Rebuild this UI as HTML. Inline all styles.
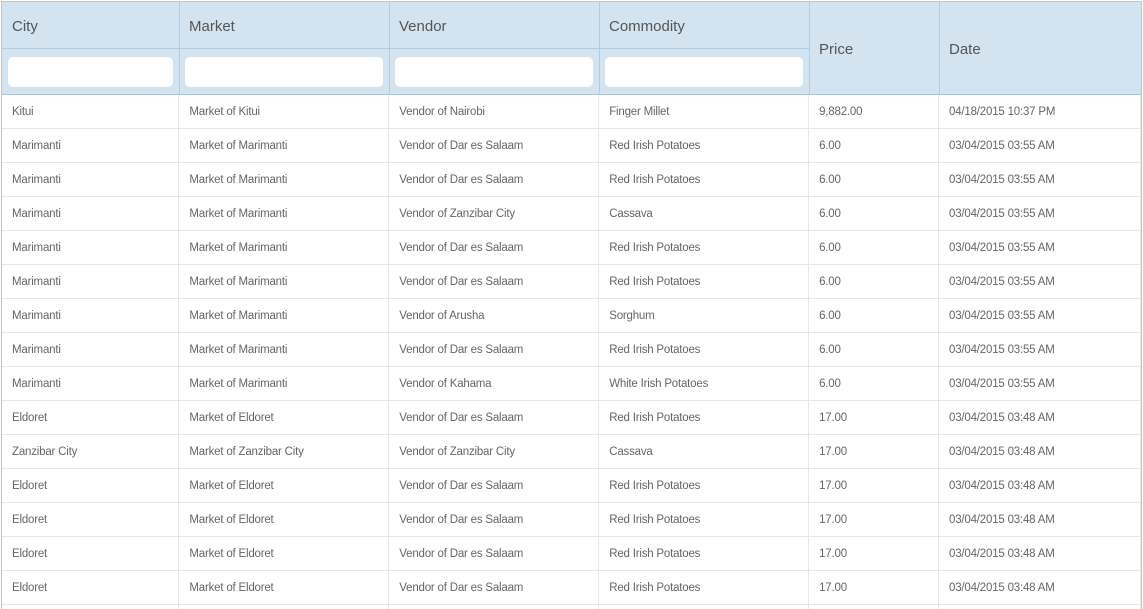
<!DOCTYPE html>
<html><head><style>
html,body{margin:0;width:1143px;height:608px;overflow:hidden;background:#fff;font-family:"Liberation Sans",sans-serif;}
.wrap{position:absolute;left:1px;top:1px;width:1139px;height:607px;border:1px solid #c4c4c4;border-bottom:none;overflow:hidden;}
.hd{position:absolute;left:0;top:0;width:1139px;height:92px;background:#d3e3f0;border-bottom:1px solid #a9c6df;}
.h{position:absolute;font-size:15px;color:#555;}
.vl{position:absolute;top:0;width:1px;height:92px;background:#b0cbe2;}
.hl{position:absolute;left:0;top:46px;width:807px;height:1px;background:#b0cbe2;}
.in{position:absolute;top:55px;height:30px;background:#fff;border-radius:5px;}
table{position:absolute;left:0;top:93px;border-collapse:collapse;font-size:11.5px;color:#666;letter-spacing:-0.2px;}
td{height:33px;border-bottom:1px solid #e6e6e6;border-right:1px solid #e6e6e6;padding:0 0 0 10px;white-space:nowrap;}
</style></head><body>
<div class="wrap">
<div class="hd">
<div class="h" style="left:10px;top:16px">City</div>
<div class="h" style="left:187px;top:16px">Market</div>
<div class="h" style="left:397px;top:16px">Vendor</div>
<div class="h" style="left:607px;top:16px">Commodity</div>
<div class="h" style="left:817px;top:39px">Price</div>
<div class="h" style="left:947px;top:39px">Date</div>
<div class="vl" style="left:177px"></div><div class="vl" style="left:387px"></div><div class="vl" style="left:597px"></div><div class="vl" style="left:807px"></div><div class="vl" style="left:937px"></div>
<div class="hl"></div>
<div class="in" style="left:6px;width:165px"></div>
<div class="in" style="left:183px;width:198px"></div>
<div class="in" style="left:393px;width:198px"></div>
<div class="in" style="left:603px;width:198px"></div>
</div>
<table>
<colgroup><col style="width:177px"><col style="width:210px"><col style="width:210px"><col style="width:210px"><col style="width:130px"><col style="width:202px"></colgroup>
<tr><td>Kitui</td><td>Market of Kitui</td><td>Vendor of Nairobi</td><td>Finger Millet</td><td>9,882.00</td><td>04/18/2015 10:37 PM</td></tr>
<tr><td>Marimanti</td><td>Market of Marimanti</td><td>Vendor of Dar es Salaam</td><td>Red Irish Potatoes</td><td>6.00</td><td>03/04/2015 03:55 AM</td></tr>
<tr><td>Marimanti</td><td>Market of Marimanti</td><td>Vendor of Dar es Salaam</td><td>Red Irish Potatoes</td><td>6.00</td><td>03/04/2015 03:55 AM</td></tr>
<tr><td>Marimanti</td><td>Market of Marimanti</td><td>Vendor of Zanzibar City</td><td>Cassava</td><td>6.00</td><td>03/04/2015 03:55 AM</td></tr>
<tr><td>Marimanti</td><td>Market of Marimanti</td><td>Vendor of Dar es Salaam</td><td>Red Irish Potatoes</td><td>6.00</td><td>03/04/2015 03:55 AM</td></tr>
<tr><td>Marimanti</td><td>Market of Marimanti</td><td>Vendor of Dar es Salaam</td><td>Red Irish Potatoes</td><td>6.00</td><td>03/04/2015 03:55 AM</td></tr>
<tr><td>Marimanti</td><td>Market of Marimanti</td><td>Vendor of Arusha</td><td>Sorghum</td><td>6.00</td><td>03/04/2015 03:55 AM</td></tr>
<tr><td>Marimanti</td><td>Market of Marimanti</td><td>Vendor of Dar es Salaam</td><td>Red Irish Potatoes</td><td>6.00</td><td>03/04/2015 03:55 AM</td></tr>
<tr><td>Marimanti</td><td>Market of Marimanti</td><td>Vendor of Kahama</td><td>White Irish Potatoes</td><td>6.00</td><td>03/04/2015 03:55 AM</td></tr>
<tr><td>Eldoret</td><td>Market of Eldoret</td><td>Vendor of Dar es Salaam</td><td>Red Irish Potatoes</td><td>17.00</td><td>03/04/2015 03:48 AM</td></tr>
<tr><td>Zanzibar City</td><td>Market of Zanzibar City</td><td>Vendor of Zanzibar City</td><td>Cassava</td><td>17.00</td><td>03/04/2015 03:48 AM</td></tr>
<tr><td>Eldoret</td><td>Market of Eldoret</td><td>Vendor of Dar es Salaam</td><td>Red Irish Potatoes</td><td>17.00</td><td>03/04/2015 03:48 AM</td></tr>
<tr><td>Eldoret</td><td>Market of Eldoret</td><td>Vendor of Dar es Salaam</td><td>Red Irish Potatoes</td><td>17.00</td><td>03/04/2015 03:48 AM</td></tr>
<tr><td>Eldoret</td><td>Market of Eldoret</td><td>Vendor of Dar es Salaam</td><td>Red Irish Potatoes</td><td>17.00</td><td>03/04/2015 03:48 AM</td></tr>
<tr><td>Eldoret</td><td>Market of Eldoret</td><td>Vendor of Dar es Salaam</td><td>Red Irish Potatoes</td><td>17.00</td><td>03/04/2015 03:48 AM</td></tr>
<tr><td>Eldoret</td><td>Market of Eldoret</td><td>Vendor of Dar es Salaam</td><td>Red Irish Potatoes</td><td>17.00</td><td>03/04/2015 03:48 AM</td></tr>
</table>
</div>
</body></html>
